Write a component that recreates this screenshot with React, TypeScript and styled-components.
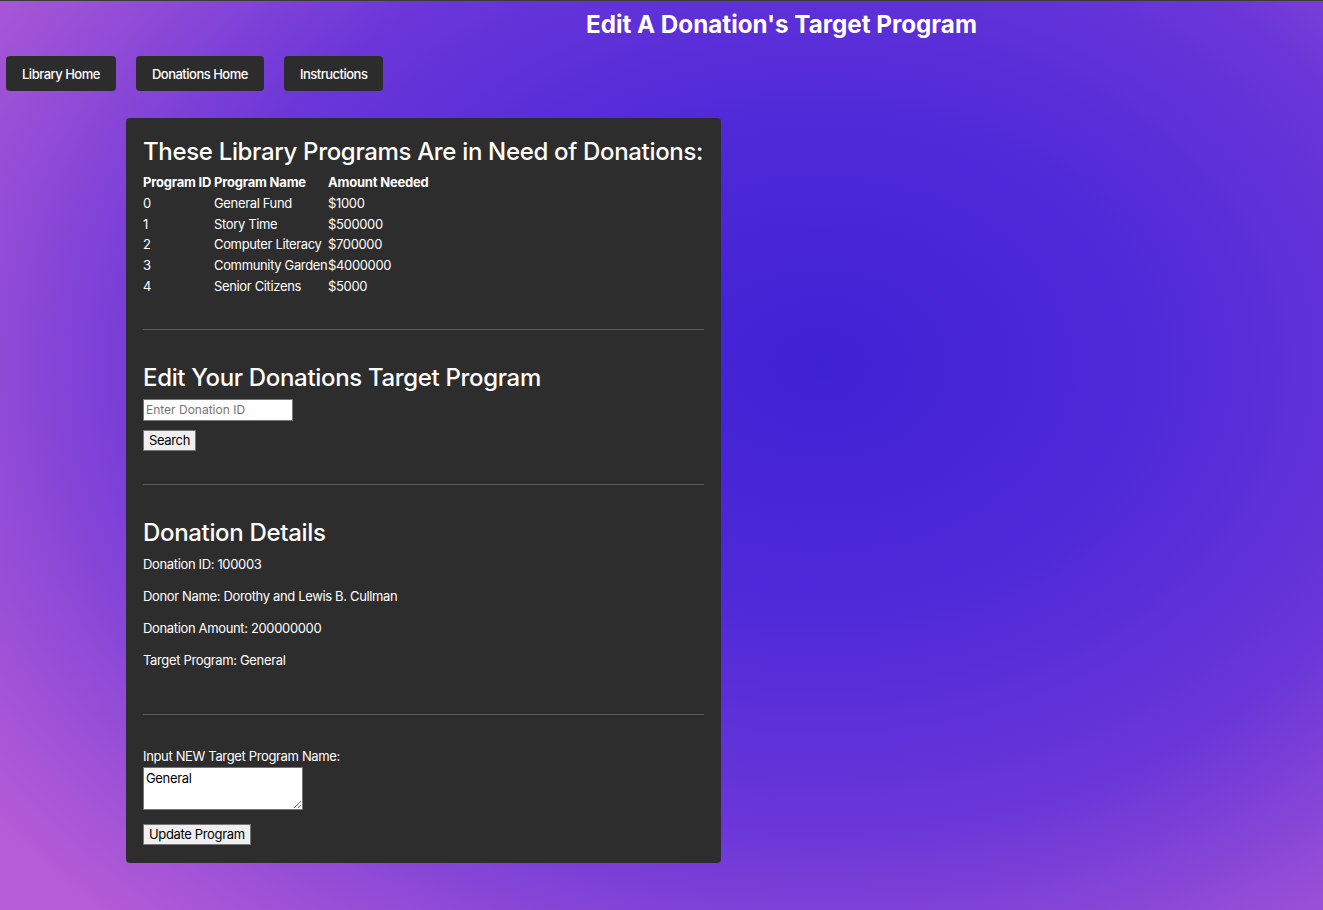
import React from "react";
import styled, { createGlobalStyle } from "styled-components";

const Global = createGlobalStyle`
  html, body { margin: 0; padding: 0; }
  body {
    min-height: 910px;
    font-family: Inter, "Noto Sans", "Liberation Sans", sans-serif;
    color: #ffffff;
    background: radial-gradient(ellipse 78% 85% at 62% 40%, #3f21d4 0%, #4e29d8 30%, #6a36d8 60%, #9a50d6 85%, #b65cd6 100%);
    border-top: 1px solid #3a3a3a;
    box-sizing: border-box;
  }
`;

const Page = styled.div`
  min-height: 909px;
  display: flex;
  flex-direction: column;
`;

const Title = styled.h1`
  margin: 0;
  padding: 8px 0 0 240px;
  text-align: center;
  font-size: 24.2px;
  font-weight: 700;
  line-height: 32px;
  letter-spacing: 0;
`;

const Nav = styled.nav`
  display: flex;
  gap: 20px;
  padding: 15px 0 0 6px;
`;

const NavButton = styled.a`
  display: flex;
  align-items: center;
  height: 35px;
  padding: 0 16px;
  background: #2c2c2c;
  border-radius: 4px;
  color: #fff;
  font-size: 13px;
  font-weight: 500;
  letter-spacing: -0.5px;
  text-decoration: none;
  box-sizing: border-box;
`;

const Card = styled.main`
  width: 595px;
  box-sizing: border-box;
  margin: 27px 0 0 126px;
  padding: 18px 17px 18px 17px;
  background: #2d2d2d;
  border-radius: 4px;
`;

const Heading = styled.h2`
  margin: 0;
  font-size: 24px;
  font-weight: 500;
  line-height: 32px;
  letter-spacing: -0.33px;
  white-space: nowrap;
`;

const Table = styled.table`
  margin-top: 4px;
  border-collapse: collapse;
  font-size: 13px;
  line-height: 16.75px;
  letter-spacing: -0.35px;
`;

const Th = styled.th<{ $w?: number }>`
  text-align: left;
  font-weight: 700;
  padding: 2px 0;
  width: ${(p) => (p.$w ? `${p.$w}px` : "auto")};
  letter-spacing: -0.2px;
`;

const Td = styled.td`
  padding: 2px 0;
  white-space: nowrap;
`;

const Rule = styled.hr<{ $top: number; $bottom: number }>`
  border: 0;
  border-top: 1px solid #5a5a5a;
  margin: ${(p) => p.$top}px 0 ${(p) => p.$bottom}px;
`;

const TextInput = styled.input`
  display: block;
  margin-top: 5px;
  width: 150px;
  height: 22px;
  box-sizing: border-box;
  border: 1px solid #767676;
  padding: 1px 2px;
  font-family: Inter, "Noto Sans", sans-serif;
  font-size: 12px;
  color: #000;
  background: #fff;
  &::placeholder { color: #757575; }
`;

const PlainButton = styled.button<{ $top: number }>`
  display: block;
  margin-top: ${(p) => p.$top}px;
  height: 21px;
  padding: 0 5px;
  box-sizing: border-box;
  border: 1px solid #767676;
  border-radius: 0;
  background: #efefef;
  color: #000;
  font-family: Inter, "Noto Sans", sans-serif;
  font-size: 13px;
  letter-spacing: -0.35px;
`;

const Detail = styled.p<{ $first?: boolean }>`
  margin: ${(p) => (p.$first ? "6px" : "13px")} 0 0;
  font-size: 13px;
  line-height: 19px;
  letter-spacing: -0.35px;
`;

const Label = styled.label`
  display: block;
  font-size: 13px;
  line-height: 17px;
  letter-spacing: -0.35px;
`;

const TextArea = styled.textarea`
  display: block;
  margin-top: 2px;
  width: 160px;
  height: 43px;
  box-sizing: border-box;
  border: 1px solid #767676;
  padding: 2px;
  font-family: Inter, "Noto Sans", sans-serif;
  font-size: 13px;
  letter-spacing: -0.35px;
  color: #000;
  background: #fff;
`;

const programs = [
  ["0", "General Fund", "$1000"],
  ["1", "Story Time", "$500000"],
  ["2", "Computer Literacy", "$700000"],
  ["3", "Community Garden", "$4000000"],
  ["4", "Senior Citizens", "$5000"],
];

export default function App() {
  return (
    <>
      <Global />
      <Page>
        <Title>Edit A Donation's Target Program</Title>
        <Nav>
          <NavButton href="#">Library Home</NavButton>
          <NavButton href="#">Donations Home</NavButton>
          <NavButton href="#">Instructions</NavButton>
        </Nav>
        <Card>
          <Heading>These Library Programs Are in Need of Donations:</Heading>
          <Table>
            <thead>
              <tr>
                <Th $w={71}>Program ID</Th>
                <Th $w={114}>Program Name</Th>
                <Th>Amount Needed</Th>
              </tr>
            </thead>
            <tbody>
              {programs.map((r) => (
                <tr key={r[0]}>
                  <Td>{r[0]}</Td>
                  <Td>{r[1]}</Td>
                  <Td>{r[2]}</Td>
                </tr>
              ))}
            </tbody>
          </Table>
          <Rule $top={32} $bottom={32} />
          <Heading>Edit Your Donations Target Program</Heading>
          <TextInput placeholder="Enter Donation ID" />
          <PlainButton $top={9}>Search</PlainButton>
          <Rule $top={33} $bottom={32} />
          <Heading>Donation Details</Heading>
          <Detail $first>Donation ID: 100003</Detail>
          <Detail>Donor Name: Dorothy and Lewis B. Cullman</Detail>
          <Detail>Donation Amount: 200000000</Detail>
          <Detail>Target Program: General</Detail>
          <Rule $top={44} $bottom={33} />
          <Label>Input NEW Target Program Name:</Label>
          <TextArea defaultValue="General" />
          <PlainButton $top={14}>Update Program</PlainButton>
        </Card>
      </Page>
    </>
  );
}
